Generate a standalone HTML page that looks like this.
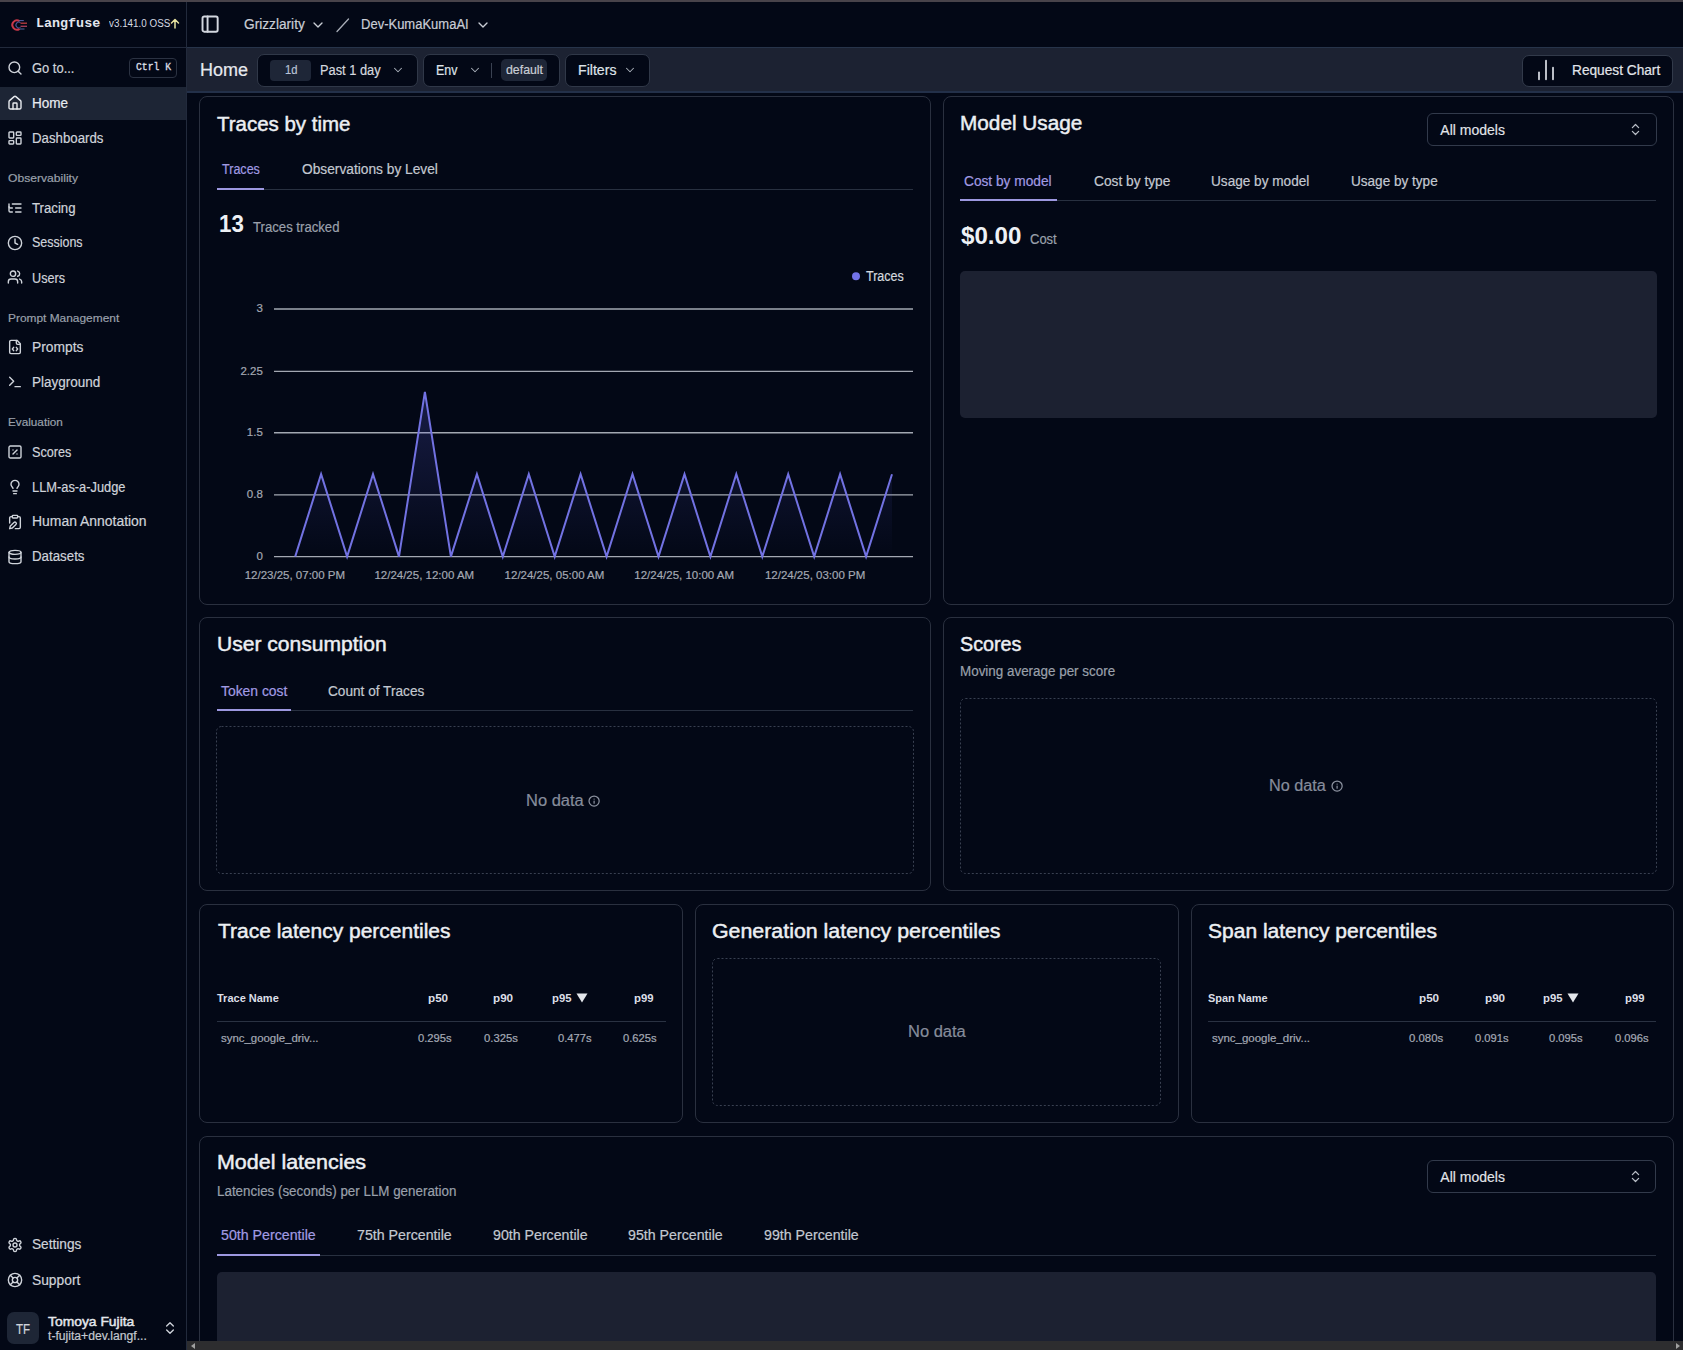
<!DOCTYPE html>
<html><head><meta charset="utf-8"><title>Langfuse</title>
<style>
html,body{margin:0;padding:0;}
body{width:1683px;height:1350px;overflow:hidden;background:#030816;position:relative;font-family:"Liberation Sans",sans-serif;}
.t{position:absolute;white-space:nowrap;transform-origin:0 50%;}
.r{position:absolute;}
.i{position:absolute;overflow:visible;}
</style></head><body>
<div class="r" style="left:0px;top:0px;width:1683px;height:2px;background:#48434a;"></div>
<div class="r" style="left:186px;top:2px;width:1px;height:1348px;background:#222a3c;"></div>
<div class="r" style="left:0px;top:47px;width:187px;height:1px;background:#222a3c;"></div>
<div class="r" style="left:187px;top:47px;width:1496px;height:1px;background:#27344a;"></div>
<svg class="i" style="left:0px;top:0px" width="40" height="40" viewBox="0 0 40 40"><path d="M19.6 21.2 A4.6 4.6 0 1 0 19.6 28.8" fill="none" stroke="#c93849" stroke-width="2"/><path d="M20.5 22.6 A2.9 2.9 0 1 0 20.5 27.4" fill="none" stroke="#4a5598" stroke-width="1.1"/><path d="M19.2 20.6 H23.8" stroke="#5563a8" stroke-width="1"/><path d="M20.5 23.2 H27" stroke="#bf3d3f" stroke-width="1.3"/><path d="M20.5 26.3 H27" stroke="#a8405c" stroke-width="1.3"/><path d="M20 29 H24.5" stroke="#4b6a9e" stroke-width="1"/></svg>
<div class="t" style="left:35.6px;top:16.6px;font-size:13.3px;line-height:13.3px;color:#e2e6ee;font-family:'Liberation Mono', monospace;font-weight:700;transform:scaleX(1.0055);">Langfuse</div>
<div class="t" style="left:108.7px;top:18.9px;font-size:10px;line-height:10px;color:#d6dae2;font-family:'Liberation Sans', sans-serif;transform:scaleX(0.9846);">v3.141.0 OSS</div>
<svg class="i" style="left:170px;top:18px" width="10" height="11" viewBox="0 0 10 11" fill="none" stroke="#e8e3a0" stroke-width="1.5" stroke-linecap="round" stroke-linejoin="round"><path d="M5 10V1.5M1.5 5 5 1.5 8.5 5"/></svg>
<svg class="i" style="left:6.5px;top:59.6px" width="16" height="16" viewBox="0 0 24 24" fill="none" stroke="#cfd3da" stroke-width="2.1" stroke-linecap="round" stroke-linejoin="round"><circle cx="11" cy="11" r="8"/><path d="m21 21-4.3-4.3"/></svg>
<div class="t" style="left:31.6px;top:61.3px;font-size:14px;line-height:14px;color:#cfd3da;font-family:'Liberation Sans', sans-serif;transform:scaleX(0.9236);-webkit-text-stroke:0.2px #cfd3da;">Go to...</div>
<div class="r" style="left:129px;top:58px;width:48px;height:20px;border:1px solid #2b3242;border-radius:4px;box-sizing:border-box;"></div>
<div class="t" style="left:136.0px;top:62.4px;font-size:10.5px;line-height:10.5px;color:#d8dce3;font-family:'Liberation Mono', monospace;transform:scaleX(0.9258);-webkit-text-stroke:0.35px #d8dce3;">Ctrl K</div>
<div class="r" style="left:0px;top:87px;width:186px;height:33px;background:#1d2535;"></div>
<svg class="i" style="left:6.5px;top:94.7px" width="16" height="16" viewBox="0 0 24 24" fill="none" stroke="#e8ebf0" stroke-width="2.1" stroke-linecap="round" stroke-linejoin="round"><path d="M15 21v-8a1 1 0 0 0-1-1h-4a1 1 0 0 0-1 1v8"/><path d="M3 10a2 2 0 0 1 .709-1.528l7-5.999a2 2 0 0 1 2.582 0l7 5.999A2 2 0 0 1 21 10v9a2 2 0 0 1-2 2H5a2 2 0 0 1-2-2z"/></svg>
<div class="t" style="left:31.6px;top:95.8px;font-size:14px;line-height:14px;color:#e8ebf0;font-family:'Liberation Sans', sans-serif;transform:scaleX(0.9666);-webkit-text-stroke:0.2px #e8ebf0;">Home</div>
<svg class="i" style="left:6.5px;top:129.7px" width="16" height="16" viewBox="0 0 24 24" fill="none" stroke="#cfd3da" stroke-width="2.1" stroke-linecap="round" stroke-linejoin="round"><rect width="7" height="9" x="3" y="3" rx="1"/><rect width="7" height="5" x="14" y="3" rx="1"/><rect width="7" height="9" x="14" y="12" rx="1"/><rect width="7" height="5" x="3" y="16" rx="1"/></svg>
<div class="t" style="left:31.6px;top:131.3px;font-size:14px;line-height:14px;color:#cfd3da;font-family:'Liberation Sans', sans-serif;transform:scaleX(0.9458);-webkit-text-stroke:0.2px #cfd3da;">Dashboards</div>
<svg class="i" style="left:6.5px;top:199.5px" width="16" height="16" viewBox="0 0 24 24" fill="none" stroke="#cfd3da" stroke-width="2.1" stroke-linecap="round" stroke-linejoin="round"><path d="M21 12h-8"/><path d="M21 6H8"/><path d="M21 18h-8"/><path d="M3 6v4c0 1.1.9 2 2 2h3"/><path d="M3 10v6c0 1.1.9 2 2 2h3"/></svg>
<div class="t" style="left:31.6px;top:200.6px;font-size:14px;line-height:14px;color:#cfd3da;font-family:'Liberation Sans', sans-serif;transform:scaleX(0.9423);-webkit-text-stroke:0.2px #cfd3da;">Tracing</div>
<svg class="i" style="left:6.5px;top:234.5px" width="16" height="16" viewBox="0 0 24 24" fill="none" stroke="#cfd3da" stroke-width="2.1" stroke-linecap="round" stroke-linejoin="round"><circle cx="12" cy="12" r="10"/><polyline points="12 6 12 12 16 14"/></svg>
<div class="t" style="left:31.6px;top:235.4px;font-size:14px;line-height:14px;color:#cfd3da;font-family:'Liberation Sans', sans-serif;transform:scaleX(0.8907);-webkit-text-stroke:0.2px #cfd3da;">Sessions</div>
<svg class="i" style="left:6.5px;top:269.3px" width="16" height="16" viewBox="0 0 24 24" fill="none" stroke="#cfd3da" stroke-width="2.1" stroke-linecap="round" stroke-linejoin="round"><path d="M16 21v-2a4 4 0 0 0-4-4H6a4 4 0 0 0-4 4v2"/><circle cx="9" cy="7" r="4"/><path d="M22 21v-2a4 4 0 0 0-3-3.87"/><path d="M16 3.13a4 4 0 0 1 0 7.75"/></svg>
<div class="t" style="left:31.6px;top:270.6px;font-size:14px;line-height:14px;color:#cfd3da;font-family:'Liberation Sans', sans-serif;transform:scaleX(0.9026);-webkit-text-stroke:0.2px #cfd3da;">Users</div>
<svg class="i" style="left:6.5px;top:339.3px" width="16" height="16" viewBox="0 0 24 24" fill="none" stroke="#cfd3da" stroke-width="2.1" stroke-linecap="round" stroke-linejoin="round"><path d="M10 12.5 8 15l2 2.5"/><path d="m14 12.5 2 2.5-2 2.5"/><path d="M14 2v4a2 2 0 0 0 2 2h4"/><path d="M15 2H6a2 2 0 0 0-2 2v16a2 2 0 0 0 2 2h12a2 2 0 0 0 2-2V7z"/></svg>
<div class="t" style="left:31.6px;top:340.1px;font-size:14px;line-height:14px;color:#cfd3da;font-family:'Liberation Sans', sans-serif;transform:scaleX(0.9861);-webkit-text-stroke:0.2px #cfd3da;">Prompts</div>
<svg class="i" style="left:6.5px;top:374.0px" width="16" height="16" viewBox="0 0 24 24" fill="none" stroke="#cfd3da" stroke-width="2.1" stroke-linecap="round" stroke-linejoin="round"><polyline points="4 17 10 11 4 5"/><line x1="12" x2="20" y1="19" y2="19"/></svg>
<div class="t" style="left:31.6px;top:374.6px;font-size:14px;line-height:14px;color:#cfd3da;font-family:'Liberation Sans', sans-serif;transform:scaleX(0.9643);-webkit-text-stroke:0.2px #cfd3da;">Playground</div>
<svg class="i" style="left:6.5px;top:444.0px" width="16" height="16" viewBox="0 0 24 24" fill="none" stroke="#cfd3da" stroke-width="2.1" stroke-linecap="round" stroke-linejoin="round"><rect width="18" height="18" x="3" y="3" rx="2"/><path d="m15 9-6 6"/><path d="M9 9h.01"/><path d="M15 15h.01"/></svg>
<div class="t" style="left:31.6px;top:444.6px;font-size:14px;line-height:14px;color:#cfd3da;font-family:'Liberation Sans', sans-serif;transform:scaleX(0.9019);-webkit-text-stroke:0.2px #cfd3da;">Scores</div>
<svg class="i" style="left:6.5px;top:479.0px" width="16" height="16" viewBox="0 0 24 24" fill="none" stroke="#cfd3da" stroke-width="2.1" stroke-linecap="round" stroke-linejoin="round"><path d="M15 14c.2-1 .7-1.7 1.5-2.5 1-.9 1.5-2.2 1.5-3.5A6 6 0 0 0 6 8c0 1 .2 2.2 1.5 3.5.7.7 1.3 1.5 1.5 2.5"/><path d="M9 18h6"/><path d="M10 22h4"/></svg>
<div class="t" style="left:31.6px;top:479.6px;font-size:14px;line-height:14px;color:#cfd3da;font-family:'Liberation Sans', sans-serif;transform:scaleX(0.9172);-webkit-text-stroke:0.2px #cfd3da;">LLM-as-a-Judge</div>
<svg class="i" style="left:6.5px;top:513.5px" width="16" height="16" viewBox="0 0 24 24" fill="none" stroke="#cfd3da" stroke-width="2.1" stroke-linecap="round" stroke-linejoin="round"><rect width="8" height="4" x="8" y="2" rx="1"/><path d="M10.4 12.6a2 2 0 0 1 3 3L8 21l-4 1 1-4Z"/><path d="M16 4h2a2 2 0 0 1 2 2v14a2 2 0 0 1-2 2h-5.5"/><path d="M4 13.5V6a2 2 0 0 1 2-2h2"/></svg>
<div class="t" style="left:31.6px;top:514.1px;font-size:14px;line-height:14px;color:#cfd3da;font-family:'Liberation Sans', sans-serif;transform:scaleX(0.9948);-webkit-text-stroke:0.2px #cfd3da;">Human Annotation</div>
<svg class="i" style="left:6.5px;top:548.5px" width="16" height="16" viewBox="0 0 24 24" fill="none" stroke="#cfd3da" stroke-width="2.1" stroke-linecap="round" stroke-linejoin="round"><ellipse cx="12" cy="5" rx="9" ry="3"/><path d="M3 5V19A9 3 0 0 0 21 19V5"/><path d="M3 12A9 3 0 0 0 21 12"/></svg>
<div class="t" style="left:31.6px;top:549.1px;font-size:14px;line-height:14px;color:#cfd3da;font-family:'Liberation Sans', sans-serif;transform:scaleX(0.9503);-webkit-text-stroke:0.2px #cfd3da;">Datasets</div>
<svg class="i" style="left:6.5px;top:1236.7px" width="16" height="16" viewBox="0 0 24 24" fill="none" stroke="#cfd3da" stroke-width="2.1" stroke-linecap="round" stroke-linejoin="round"><path d="M12.22 2h-.44a2 2 0 0 0-2 2v.18a2 2 0 0 1-1 1.73l-.43.25a2 2 0 0 1-2 0l-.15-.08a2 2 0 0 0-2.73.73l-.22.38a2 2 0 0 0 .73 2.73l.15.1a2 2 0 0 1 1 1.72v.51a2 2 0 0 1-1 1.74l-.15.09a2 2 0 0 0-.73 2.73l.22.38a2 2 0 0 0 2.73.73l.15-.08a2 2 0 0 1 2 0l.43.25a2 2 0 0 1 1 1.73V20a2 2 0 0 0 2 2h.44a2 2 0 0 0 2-2v-.18a2 2 0 0 1 1-1.73l.43-.25a2 2 0 0 1 2 0l.15.08a2 2 0 0 0 2.73-.73l.22-.39a2 2 0 0 0-.73-2.73l-.15-.08a2 2 0 0 1-1-1.74v-.5a2 2 0 0 1 1-1.74l.15-.09a2 2 0 0 0 .73-2.73l-.22-.38a2 2 0 0 0-2.73-.73l-.15.08a2 2 0 0 1-2 0l-.43-.25a2 2 0 0 1-1-1.73V4a2 2 0 0 0-2-2z"/><circle cx="12" cy="12" r="3"/></svg>
<div class="t" style="left:31.6px;top:1236.9px;font-size:14px;line-height:14px;color:#cfd3da;font-family:'Liberation Sans', sans-serif;transform:scaleX(0.9765);-webkit-text-stroke:0.2px #cfd3da;">Settings</div>
<svg class="i" style="left:6.5px;top:1271.7px" width="16" height="16" viewBox="0 0 24 24" fill="none" stroke="#cfd3da" stroke-width="2.1" stroke-linecap="round" stroke-linejoin="round"><circle cx="12" cy="12" r="10"/><path d="m4.93 4.93 4.24 4.24"/><path d="m14.83 9.17 4.24-4.24"/><path d="m14.83 14.83 4.24 4.24"/><path d="m9.17 14.83-4.24 4.24"/><circle cx="12" cy="12" r="4"/></svg>
<div class="t" style="left:31.6px;top:1272.5px;font-size:14px;line-height:14px;color:#cfd3da;font-family:'Liberation Sans', sans-serif;transform:scaleX(0.9850);-webkit-text-stroke:0.2px #cfd3da;">Support</div>
<div class="t" style="left:7.9px;top:173.1px;font-size:11.5px;line-height:11.5px;color:#9aa0ab;font-family:'Liberation Sans', sans-serif;transform:scaleX(1.0531);-webkit-text-stroke:0.2px #9aa0ab;">Observability</div>
<div class="t" style="left:7.9px;top:312.9px;font-size:11.5px;line-height:11.5px;color:#9aa0ab;font-family:'Liberation Sans', sans-serif;transform:scaleX(1.0355);-webkit-text-stroke:0.2px #9aa0ab;">Prompt Management</div>
<div class="t" style="left:7.9px;top:416.7px;font-size:11.5px;line-height:11.5px;color:#9aa0ab;font-family:'Liberation Sans', sans-serif;transform:scaleX(1.0204);-webkit-text-stroke:0.2px #9aa0ab;">Evaluation</div>
<div class="r" style="left:7px;top:1312px;width:32px;height:32px;background:#1e2636;border-radius:7px;"></div>
<div class="t" style="left:15.8px;top:1321.6px;font-size:14px;line-height:14px;color:#d0d4db;font-family:'Liberation Sans', sans-serif;transform:scaleX(0.8244);-webkit-text-stroke:0.2px #d0d4db;">TF</div>
<div class="t" style="left:48.0px;top:1314.6px;font-size:13px;line-height:13px;color:#e4e7ec;font-family:'Liberation Sans', sans-serif;transform:scaleX(1.0665);-webkit-text-stroke:0.45px #e4e7ec;">Tomoya Fujita</div>
<div class="t" style="left:48.0px;top:1330.0px;font-size:12px;line-height:12px;color:#c4c8d0;font-family:'Liberation Sans', sans-serif;transform:scaleX(1.0133);-webkit-text-stroke:0.2px #c4c8d0;">t-fujita+dev.langf...</div>
<svg class="i" style="left:162px;top:1320px" width="16" height="16" viewBox="0 0 24 24" fill="none" stroke="#cfd3da" stroke-width="2" stroke-linecap="round" stroke-linejoin="round"><path d="m7 15 5 5 5-5"/><path d="m7 9 5-5 5 5"/></svg>
<svg class="i" style="left:199.5px;top:14.4px" width="20.2" height="20.2" viewBox="0 0 24 24" fill="none" stroke="#d3d7df" stroke-width="2.3" stroke-linecap="round" stroke-linejoin="round"><rect width="18" height="18" x="3" y="3" rx="2"/><path d="M9 3v18"/></svg>
<div class="t" style="left:244.3px;top:17.1px;font-size:14px;line-height:14px;color:#c9cdd5;font-family:'Liberation Sans', sans-serif;transform:scaleX(0.9771);-webkit-text-stroke:0.2px #c9cdd5;">Grizzlarity</div>
<svg class="i" style="left:310px;top:17px" width="16" height="16" viewBox="0 0 24 24" fill="none" stroke="#c9cdd5" stroke-width="2" stroke-linecap="round" stroke-linejoin="round"><path d="m6 9 6 6 6-6"/></svg>
<svg class="i" style="left:335px;top:17px" width="16" height="16" viewBox="0 0 16 16"><path d="M2 14.5 13.5 2" stroke="#a9aeb8" stroke-width="1.3" stroke-linecap="round"/></svg>
<div class="t" style="left:361.3px;top:17.1px;font-size:14px;line-height:14px;color:#c9cdd5;font-family:'Liberation Sans', sans-serif;transform:scaleX(0.9290);-webkit-text-stroke:0.2px #c9cdd5;">Dev-KumaKumaAI</div>
<svg class="i" style="left:474.5px;top:17px" width="16" height="16" viewBox="0 0 24 24" fill="none" stroke="#c9cdd5" stroke-width="2" stroke-linecap="round" stroke-linejoin="round"><path d="m6 9 6 6 6-6"/></svg>
<div class="r" style="left:187px;top:48px;width:1496px;height:44px;background:#1c2232;"></div>
<div class="r" style="left:187px;top:91px;width:1496px;height:1.5px;background:#233049;"></div>
<div class="t" style="left:200.0px;top:61.2px;font-size:18px;line-height:18px;color:#e6e9ee;font-family:'Liberation Sans', sans-serif;-webkit-text-stroke:0.2px #e6e9ee;">Home</div>
<div class="r" style="left:257px;top:54px;width:161px;height:32.5px;background:#030816;border:1px solid #303848;border-radius:7px;box-sizing:border-box;"></div>
<div class="r" style="left:270px;top:60px;width:40.5px;height:20.5px;background:#1e2637;border-radius:4px;"></div>
<div class="t" style="left:285.0px;top:62.9px;font-size:13px;line-height:13px;color:#b9c3d6;font-family:'Liberation Sans', sans-serif;transform:scaleX(0.8644);-webkit-text-stroke:0.2px #b9c3d6;">1d</div>
<div class="t" style="left:320.1px;top:62.6px;font-size:14px;line-height:14px;color:#d4d8df;font-family:'Liberation Sans', sans-serif;transform:scaleX(0.9161);-webkit-text-stroke:0.2px #d4d8df;">Past 1 day</div>
<svg class="i" style="left:390.5px;top:63px" width="14" height="14" viewBox="0 0 24 24" fill="none" stroke="#aab0ba" stroke-width="1.8" stroke-linecap="round" stroke-linejoin="round"><path d="m6 9 6 6 6-6"/></svg>
<div class="r" style="left:423px;top:54px;width:137px;height:32.5px;background:#030816;border:1px solid #303848;border-radius:7px;box-sizing:border-box;"></div>
<div class="t" style="left:436.4px;top:63.2px;font-size:14px;line-height:14px;color:#dfe3e9;font-family:'Liberation Sans', sans-serif;transform:scaleX(0.8871);-webkit-text-stroke:0.2px #dfe3e9;">Env</div>
<svg class="i" style="left:467.5px;top:63px" width="14" height="14" viewBox="0 0 24 24" fill="none" stroke="#aab0ba" stroke-width="1.8" stroke-linecap="round" stroke-linejoin="round"><path d="m6 9 6 6 6-6"/></svg>
<div class="r" style="left:491px;top:63px;width:1px;height:15px;background:#3a4252;"></div>
<div class="r" style="left:500.5px;top:59.3px;width:46.5px;height:22px;background:#1e2637;border-radius:5px;"></div>
<div class="t" style="left:505.6px;top:62.6px;font-size:13px;line-height:13px;color:#c9cdd5;font-family:'Liberation Sans', sans-serif;transform:scaleX(0.9479);-webkit-text-stroke:0.2px #c9cdd5;">default</div>
<div class="r" style="left:565px;top:54px;width:85px;height:32.5px;background:#030816;border:1px solid #303848;border-radius:7px;box-sizing:border-box;"></div>
<div class="t" style="left:578.3px;top:63.2px;font-size:14px;line-height:14px;color:#dfe3e9;font-family:'Liberation Sans', sans-serif;transform:scaleX(1.0102);-webkit-text-stroke:0.2px #dfe3e9;">Filters</div>
<svg class="i" style="left:622.5px;top:63px" width="14" height="14" viewBox="0 0 24 24" fill="none" stroke="#aab0ba" stroke-width="1.8" stroke-linecap="round" stroke-linejoin="round"><path d="m6 9 6 6 6-6"/></svg>
<div class="r" style="left:1522px;top:54.5px;width:151px;height:32px;background:#030816;border:1px solid #323a4a;border-radius:7px;box-sizing:border-box;"></div>
<svg class="i" style="left:1531.9px;top:56.3px" width="28" height="28" viewBox="0 0 24 24" fill="none" stroke="#d6dae2" stroke-width="1.5" stroke-linecap="round" stroke-linejoin="round"><line x1="18" x2="18" y1="20" y2="10"/><line x1="12" x2="12" y1="20" y2="4"/><line x1="6" x2="6" y1="20" y2="14"/></svg>
<div class="t" style="left:1571.8px;top:62.9px;font-size:14px;line-height:14px;color:#e2e5ea;font-family:'Liberation Sans', sans-serif;transform:scaleX(0.9771);-webkit-text-stroke:0.2px #e2e5ea;">Request Chart</div>
<div class="r" style="left:199px;top:96px;width:732px;height:509px;background:#030816;border:1px solid #2a303f;border-radius:8px;box-sizing:border-box;"></div>
<div class="t" style="left:217.2px;top:113.5px;font-size:20px;line-height:20px;color:#eceff3;font-family:'Liberation Sans', sans-serif;transform:scaleX(1.0230);-webkit-text-stroke:0.45px #eceff3;">Traces by time</div>
<div class="r" style="left:217px;top:189px;width:696px;height:1px;background:#283040;"></div>
<div class="r" style="left:217px;top:188px;width:47px;height:2px;background:#9d98e0;"></div>
<div class="t" style="left:221.6px;top:162.4px;font-size:14px;line-height:14px;color:#a19be3;font-family:'Liberation Sans', sans-serif;transform:scaleX(0.8967);-webkit-text-stroke:0.2px #a19be3;">Traces</div>
<div class="t" style="left:302.0px;top:162.4px;font-size:14px;line-height:14px;color:#c3c8d1;font-family:'Liberation Sans', sans-serif;transform:scaleX(0.9811);-webkit-text-stroke:0.2px #c3c8d1;">Observations by Level</div>
<div class="t" style="left:218.5px;top:211.9px;font-size:24px;line-height:24px;color:#eef1f5;font-family:'Liberation Sans', sans-serif;font-weight:700;transform:scaleX(0.9290);">13</div>
<div class="t" style="left:253.3px;top:220.3px;font-size:14px;line-height:14px;color:#9aa0ab;font-family:'Liberation Sans', sans-serif;transform:scaleX(0.9395);-webkit-text-stroke:0.2px #9aa0ab;">Traces tracked</div>
<svg class="i" style="left:0px;top:0px" width="1683" height="700" viewBox="0 0 1683 700"><defs><linearGradient id="g" x1="0" y1="0" x2="0" y2="1"><stop offset="0" stop-color="#6366f1" stop-opacity="0.22"/><stop offset="1" stop-color="#6366f1" stop-opacity="0.0"/></linearGradient></defs><line x1="274" x2="913" y1="309" y2="309" stroke="#a3a8b2" stroke-width="1.35"/><line x1="274" x2="913" y1="371.3" y2="371.3" stroke="#a3a8b2" stroke-width="1.35"/><line x1="274" x2="913" y1="432.7" y2="432.7" stroke="#a3a8b2" stroke-width="1.35"/><line x1="274" x2="913" y1="494.8" y2="494.8" stroke="#a3a8b2" stroke-width="1.35"/><line x1="274" x2="913" y1="556.6" y2="556.6" stroke="#a3a8b2" stroke-width="1.35"/><path d="M295.2,556.6 L295.2,556.6 L321.1,474.2 L347.1,556.6 L373.0,474.2 L399.0,556.6 L424.9,391.8 L450.9,556.6 L476.9,474.2 L502.8,556.6 L528.8,474.2 L554.7,556.6 L580.6,474.2 L606.6,556.6 L632.5,474.2 L658.5,556.6 L684.5,474.2 L710.4,556.6 L736.3,474.2 L762.3,556.6 L788.2,474.2 L814.2,556.6 L840.1,474.2 L866.1,556.6 L892.0,474.2 L892.0,556.6 Z" fill="url(#g)"/><polyline points="295.2,556.6 321.1,474.2 347.1,556.6 373.0,474.2 399.0,556.6 424.9,391.8 450.9,556.6 476.9,474.2 502.8,556.6 528.8,474.2 554.7,556.6 580.6,474.2 606.6,556.6 632.5,474.2 658.5,556.6 684.5,474.2 710.4,556.6 736.3,474.2 762.3,556.6 788.2,474.2 814.2,556.6 840.1,474.2 866.1,556.6 892.0,474.2" fill="none" stroke="#7272e2" stroke-width="2" stroke-linejoin="miter"/><circle cx="856" cy="276.3" r="4" fill="#7272e8"/></svg>
<div class="t" style="left:866.4px;top:268.7px;font-size:14px;line-height:14px;color:#d4d8df;font-family:'Liberation Sans', sans-serif;transform:scaleX(0.8943);-webkit-text-stroke:0.2px #d4d8df;">Traces</div>
<div class="t" style="left:256.4px;top:303.3px;font-size:11.5px;line-height:11.5px;color:#a3a8b3;font-family:'Liberation Sans', sans-serif;-webkit-text-stroke:0.2px #a3a8b3;">3</div>
<div class="t" style="left:240.4px;top:365.6px;font-size:11.5px;line-height:11.5px;color:#a3a8b3;font-family:'Liberation Sans', sans-serif;-webkit-text-stroke:0.2px #a3a8b3;">2.25</div>
<div class="t" style="left:246.8px;top:427.0px;font-size:11.5px;line-height:11.5px;color:#a3a8b3;font-family:'Liberation Sans', sans-serif;-webkit-text-stroke:0.2px #a3a8b3;">1.5</div>
<div class="t" style="left:246.8px;top:489.1px;font-size:11.5px;line-height:11.5px;color:#a3a8b3;font-family:'Liberation Sans', sans-serif;-webkit-text-stroke:0.2px #a3a8b3;">0.8</div>
<div class="t" style="left:256.4px;top:550.9px;font-size:11.5px;line-height:11.5px;color:#a3a8b3;font-family:'Liberation Sans', sans-serif;-webkit-text-stroke:0.2px #a3a8b3;">0</div>
<div class="t" style="left:244.7px;top:569.7px;font-size:11.5px;line-height:11.5px;color:#a3a8b3;font-family:'Liberation Sans', sans-serif;-webkit-text-stroke:0.2px #a3a8b3;">12/23/25, 07:00 PM</div>
<div class="t" style="left:374.4px;top:569.7px;font-size:11.5px;line-height:11.5px;color:#a3a8b3;font-family:'Liberation Sans', sans-serif;-webkit-text-stroke:0.2px #a3a8b3;">12/24/25, 12:00 AM</div>
<div class="t" style="left:504.6px;top:569.7px;font-size:11.5px;line-height:11.5px;color:#a3a8b3;font-family:'Liberation Sans', sans-serif;-webkit-text-stroke:0.2px #a3a8b3;">12/24/25, 05:00 AM</div>
<div class="t" style="left:634.3px;top:569.7px;font-size:11.5px;line-height:11.5px;color:#a3a8b3;font-family:'Liberation Sans', sans-serif;-webkit-text-stroke:0.2px #a3a8b3;">12/24/25, 10:00 AM</div>
<div class="t" style="left:764.9px;top:569.7px;font-size:11.5px;line-height:11.5px;color:#a3a8b3;font-family:'Liberation Sans', sans-serif;-webkit-text-stroke:0.2px #a3a8b3;">12/24/25, 03:00 PM</div>
<div class="r" style="left:943px;top:96px;width:731px;height:509px;background:#030816;border:1px solid #2a303f;border-radius:8px;box-sizing:border-box;"></div>
<div class="t" style="left:960.3px;top:112.5px;font-size:20px;line-height:20px;color:#eceff3;font-family:'Liberation Sans', sans-serif;transform:scaleX(1.0378);-webkit-text-stroke:0.45px #eceff3;">Model Usage</div>
<div class="r" style="left:1427px;top:113px;width:229.5px;height:32.5px;background:#030816;border:1px solid #323a4b;border-radius:6px;box-sizing:border-box;"></div>
<div class="t" style="left:1440.3px;top:122.7px;font-size:14px;line-height:14px;color:#e2e5ea;font-family:'Liberation Sans', sans-serif;-webkit-text-stroke:0.15px #e2e5ea;">All models</div>
<svg class="i" style="left:1627.5px;top:121.5px" width="15" height="15" viewBox="0 0 24 24" fill="none" stroke="#b8bdc6" stroke-width="2" stroke-linecap="round" stroke-linejoin="round"><path d="m7 15 5 5 5-5"/><path d="m7 9 5-5 5 5"/></svg>
<div class="r" style="left:960px;top:200px;width:696px;height:1px;background:#283040;"></div>
<div class="r" style="left:960px;top:199px;width:97px;height:2px;background:#9d98e0;"></div>
<div class="t" style="left:964.3px;top:173.8px;font-size:14px;line-height:14px;color:#a19be3;font-family:'Liberation Sans', sans-serif;transform:scaleX(0.9789);-webkit-text-stroke:0.2px #a19be3;">Cost by model</div>
<div class="t" style="left:1093.7px;top:173.8px;font-size:14px;line-height:14px;color:#c3c8d1;font-family:'Liberation Sans', sans-serif;transform:scaleX(0.9818);-webkit-text-stroke:0.2px #c3c8d1;">Cost by type</div>
<div class="t" style="left:1211.4px;top:173.8px;font-size:14px;line-height:14px;color:#c3c8d1;font-family:'Liberation Sans', sans-serif;transform:scaleX(0.9717);-webkit-text-stroke:0.2px #c3c8d1;">Usage by model</div>
<div class="t" style="left:1351.0px;top:173.8px;font-size:14px;line-height:14px;color:#c3c8d1;font-family:'Liberation Sans', sans-serif;transform:scaleX(0.9687);-webkit-text-stroke:0.2px #c3c8d1;">Usage by type</div>
<div class="t" style="left:960.8px;top:224.0px;font-size:24px;line-height:24px;color:#eef1f5;font-family:'Liberation Sans', sans-serif;font-weight:700;transform:scaleX(1.0057);">$0.00</div>
<div class="t" style="left:1030.1px;top:232.4px;font-size:14px;line-height:14px;color:#9aa0ab;font-family:'Liberation Sans', sans-serif;transform:scaleX(0.9275);-webkit-text-stroke:0.2px #9aa0ab;">Cost</div>
<div class="r" style="left:960px;top:271px;width:696.5px;height:147px;background:#1c2131;border-radius:5px;"></div>
<div class="r" style="left:199px;top:617px;width:732px;height:274px;background:#030816;border:1px solid #2a303f;border-radius:8px;box-sizing:border-box;"></div>
<div class="t" style="left:217.0px;top:634.4px;font-size:20px;line-height:20px;color:#eceff3;font-family:'Liberation Sans', sans-serif;transform:scaleX(1.0528);-webkit-text-stroke:0.45px #eceff3;">User consumption</div>
<div class="r" style="left:217px;top:709.5px;width:696px;height:1px;background:#283040;"></div>
<div class="r" style="left:217px;top:708.5px;width:74.30000000000001px;height:2px;background:#9d98e0;"></div>
<div class="t" style="left:220.5px;top:683.6px;font-size:14px;line-height:14px;color:#a19be3;font-family:'Liberation Sans', sans-serif;transform:scaleX(0.9922);-webkit-text-stroke:0.2px #a19be3;">Token cost</div>
<div class="t" style="left:328.2px;top:683.6px;font-size:14px;line-height:14px;color:#c3c8d1;font-family:'Liberation Sans', sans-serif;transform:scaleX(0.9744);-webkit-text-stroke:0.2px #c3c8d1;">Count of Traces</div>
<svg class="i" style="left:216px;top:726px" width="698" height="148" viewBox="0 0 698 148"><rect x="0.5" y="0.5" width="697" height="147" rx="5" fill="none" stroke="#394051" stroke-width="1" stroke-dasharray="2 2"/></svg>
<div class="t" style="left:525.6px;top:792.6px;font-size:16px;line-height:16px;color:#868c9b;font-family:'Liberation Sans', sans-serif;transform:scaleX(1.0296);-webkit-text-stroke:0.2px #868c9b;">No data</div>
<svg class="i" style="left:587.5px;top:794.6px" width="12.2" height="12.2" viewBox="0 0 24 24" fill="none" stroke="#8d93a1" stroke-width="2.4" stroke-linecap="round" stroke-linejoin="round"><circle cx="12" cy="12" r="10"/><path d="M12 16v-4"/><path d="M12 8h.01"/></svg>
<div class="r" style="left:943px;top:617px;width:731px;height:274px;background:#030816;border:1px solid #2a303f;border-radius:8px;box-sizing:border-box;"></div>
<div class="t" style="left:960.3px;top:634.4px;font-size:20px;line-height:20px;color:#eceff3;font-family:'Liberation Sans', sans-serif;transform:scaleX(0.9864);-webkit-text-stroke:0.45px #eceff3;">Scores</div>
<div class="t" style="left:960.3px;top:664.2px;font-size:14px;line-height:14px;color:#9aa0ab;font-family:'Liberation Sans', sans-serif;transform:scaleX(0.9582);-webkit-text-stroke:0.2px #9aa0ab;">Moving average per score</div>
<svg class="i" style="left:960px;top:698px" width="697" height="176" viewBox="0 0 697 176"><rect x="0.5" y="0.5" width="696" height="175" rx="5" fill="none" stroke="#394051" stroke-width="1" stroke-dasharray="2 2"/></svg>
<div class="t" style="left:1269.2px;top:778.0px;font-size:16px;line-height:16px;color:#868c9b;font-family:'Liberation Sans', sans-serif;transform:scaleX(1.0136);-webkit-text-stroke:0.2px #868c9b;">No data</div>
<svg class="i" style="left:1331.2px;top:779.6px" width="12.2" height="12.2" viewBox="0 0 24 24" fill="none" stroke="#8d93a1" stroke-width="2.4" stroke-linecap="round" stroke-linejoin="round"><circle cx="12" cy="12" r="10"/><path d="M12 16v-4"/><path d="M12 8h.01"/></svg>
<div class="r" style="left:199px;top:904px;width:484px;height:219px;background:#030816;border:1px solid #2a303f;border-radius:8px;box-sizing:border-box;"></div>
<div class="t" style="left:217.5px;top:920.7px;font-size:20px;line-height:20px;color:#eceff3;font-family:'Liberation Sans', sans-serif;transform:scaleX(1.0492);-webkit-text-stroke:0.45px #eceff3;">Trace latency percentiles</div>
<div class="t" style="left:217.0px;top:992.6px;font-size:11px;line-height:11px;color:#dcdfe6;font-family:'Liberation Sans', sans-serif;font-weight:700;">Trace Name</div>
<div class="t" style="left:427.5px;top:992.6px;font-size:11px;line-height:11px;color:#dcdfe6;font-family:'Liberation Sans', sans-serif;font-weight:700;transform:scaleX(1.0604);">p50</div>
<div class="t" style="left:492.9px;top:992.6px;font-size:11px;line-height:11px;color:#dcdfe6;font-family:'Liberation Sans', sans-serif;font-weight:700;transform:scaleX(1.0604);">p90</div>
<div class="t" style="left:552.0px;top:992.6px;font-size:11px;line-height:11px;color:#dcdfe6;font-family:'Liberation Sans', sans-serif;font-weight:700;transform:scaleX(1.0287);">p95</div>
<div class="t" style="left:633.6px;top:992.6px;font-size:11px;line-height:11px;color:#dcdfe6;font-family:'Liberation Sans', sans-serif;font-weight:700;transform:scaleX(1.0340);">p99</div>
<div class="r" style="left:217px;top:1020.5px;width:448.5px;height:1px;background:#2a3242;"></div>
<div class="t" style="left:220.5px;top:1032.8px;font-size:11px;line-height:11px;color:#a5aab5;font-family:'Liberation Sans', sans-serif;transform:scaleX(1.0376);-webkit-text-stroke:0.2px #a5aab5;">sync_google_driv...</div>
<div class="t" style="left:417.9px;top:1032.8px;font-size:11px;line-height:11px;color:#a5aab5;font-family:'Liberation Sans', sans-serif;transform:scaleX(1.0173);-webkit-text-stroke:0.2px #a5aab5;">0.295s</div>
<div class="t" style="left:483.6px;top:1032.8px;font-size:11px;line-height:11px;color:#a5aab5;font-family:'Liberation Sans', sans-serif;transform:scaleX(1.0264);-webkit-text-stroke:0.2px #a5aab5;">0.325s</div>
<div class="t" style="left:558.0px;top:1032.8px;font-size:11px;line-height:11px;color:#a5aab5;font-family:'Liberation Sans', sans-serif;transform:scaleX(1.0173);-webkit-text-stroke:0.2px #a5aab5;">0.477s</div>
<div class="t" style="left:623.4px;top:1032.8px;font-size:11px;line-height:11px;color:#a5aab5;font-family:'Liberation Sans', sans-serif;transform:scaleX(1.0173);-webkit-text-stroke:0.2px #a5aab5;">0.625s</div>
<svg class="i" style="left:576px;top:993px" width="12" height="10" viewBox="0 0 12 10"><path d="M0.5 0.5 H11.5 L6 9.5 Z" fill="#e4e7ec"/></svg>
<div class="r" style="left:695px;top:904px;width:484px;height:219px;background:#030816;border:1px solid #2a303f;border-radius:8px;box-sizing:border-box;"></div>
<div class="t" style="left:712.4px;top:920.7px;font-size:20px;line-height:20px;color:#eceff3;font-family:'Liberation Sans', sans-serif;transform:scaleX(1.0679);-webkit-text-stroke:0.45px #eceff3;">Generation latency percentiles</div>
<svg class="i" style="left:712px;top:958px" width="449" height="148" viewBox="0 0 449 148"><rect x="0.5" y="0.5" width="448" height="147" rx="5" fill="none" stroke="#394051" stroke-width="1" stroke-dasharray="2 2"/></svg>
<div class="t" style="left:907.7px;top:1024.1px;font-size:16px;line-height:16px;color:#868c9b;font-family:'Liberation Sans', sans-serif;transform:scaleX(1.0314);-webkit-text-stroke:0.2px #868c9b;">No data</div>
<div class="r" style="left:1191px;top:904px;width:483px;height:219px;background:#030816;border:1px solid #2a303f;border-radius:8px;box-sizing:border-box;"></div>
<div class="t" style="left:1208.0px;top:920.7px;font-size:20px;line-height:20px;color:#eceff3;font-family:'Liberation Sans', sans-serif;transform:scaleX(1.0504);-webkit-text-stroke:0.45px #eceff3;">Span latency percentiles</div>
<div class="t" style="left:1208.0px;top:992.6px;font-size:11px;line-height:11px;color:#dcdfe6;font-family:'Liberation Sans', sans-serif;font-weight:700;transform:scaleX(0.9948);">Span Name</div>
<div class="t" style="left:1418.6px;top:992.6px;font-size:11px;line-height:11px;color:#dcdfe6;font-family:'Liberation Sans', sans-serif;font-weight:700;transform:scaleX(1.0604);">p50</div>
<div class="t" style="left:1484.7px;top:992.6px;font-size:11px;line-height:11px;color:#dcdfe6;font-family:'Liberation Sans', sans-serif;font-weight:700;transform:scaleX(1.0604);">p90</div>
<div class="t" style="left:1543.0px;top:992.6px;font-size:11px;line-height:11px;color:#dcdfe6;font-family:'Liberation Sans', sans-serif;font-weight:700;transform:scaleX(1.0287);">p95</div>
<div class="t" style="left:1624.5px;top:992.6px;font-size:11px;line-height:11px;color:#dcdfe6;font-family:'Liberation Sans', sans-serif;font-weight:700;transform:scaleX(1.0287);">p99</div>
<div class="r" style="left:1208px;top:1020.5px;width:448.4000000000001px;height:1px;background:#2a3242;"></div>
<div class="t" style="left:1211.5px;top:1032.8px;font-size:11px;line-height:11px;color:#a5aab5;font-family:'Liberation Sans', sans-serif;transform:scaleX(1.0430);-webkit-text-stroke:0.2px #a5aab5;">sync_google_driv...</div>
<div class="t" style="left:1408.6px;top:1032.8px;font-size:11px;line-height:11px;color:#a5aab5;font-family:'Liberation Sans', sans-serif;transform:scaleX(1.0355);-webkit-text-stroke:0.2px #a5aab5;">0.080s</div>
<div class="t" style="left:1474.7px;top:1032.8px;font-size:11px;line-height:11px;color:#a5aab5;font-family:'Liberation Sans', sans-serif;transform:scaleX(1.0173);-webkit-text-stroke:0.2px #a5aab5;">0.091s</div>
<div class="t" style="left:1549.0px;top:1032.8px;font-size:11px;line-height:11px;color:#a5aab5;font-family:'Liberation Sans', sans-serif;transform:scaleX(1.0173);-webkit-text-stroke:0.2px #a5aab5;">0.095s</div>
<div class="t" style="left:1614.5px;top:1032.8px;font-size:11px;line-height:11px;color:#a5aab5;font-family:'Liberation Sans', sans-serif;transform:scaleX(1.0173);-webkit-text-stroke:0.2px #a5aab5;">0.096s</div>
<svg class="i" style="left:1567px;top:993px" width="12" height="10" viewBox="0 0 12 10"><path d="M0.5 0.5 H11.5 L6 9.5 Z" fill="#e4e7ec"/></svg>
<div class="r" style="left:199px;top:1136px;width:1475px;height:260px;background:#030816;border:1px solid #2a303f;border-radius:8px;box-sizing:border-box;"></div>
<div class="t" style="left:216.6px;top:1152.2px;font-size:20px;line-height:20px;color:#eceff3;font-family:'Liberation Sans', sans-serif;transform:scaleX(1.0729);-webkit-text-stroke:0.45px #eceff3;">Model latencies</div>
<div class="t" style="left:216.6px;top:1183.7px;font-size:14px;line-height:14px;color:#9aa0ab;font-family:'Liberation Sans', sans-serif;transform:scaleX(0.9553);-webkit-text-stroke:0.2px #9aa0ab;">Latencies (seconds) per LLM generation</div>
<div class="r" style="left:1426.6px;top:1160px;width:229.5px;height:33px;background:#030816;border:1px solid #323a4b;border-radius:6px;box-sizing:border-box;"></div>
<div class="t" style="left:1440.3px;top:1170.0px;font-size:14px;line-height:14px;color:#e2e5ea;font-family:'Liberation Sans', sans-serif;-webkit-text-stroke:0.15px #e2e5ea;">All models</div>
<svg class="i" style="left:1627.5px;top:1169px" width="15" height="15" viewBox="0 0 24 24" fill="none" stroke="#b8bdc6" stroke-width="2" stroke-linecap="round" stroke-linejoin="round"><path d="m7 15 5 5 5-5"/><path d="m7 9 5-5 5 5"/></svg>
<div class="r" style="left:216.6px;top:1254.5px;width:1439.4px;height:1px;background:#283040;"></div>
<div class="r" style="left:216.6px;top:1253.5px;width:103.6px;height:2px;background:#9d98e0;"></div>
<div class="t" style="left:221.0px;top:1227.7px;font-size:14px;line-height:14px;color:#a19be3;font-family:'Liberation Sans', sans-serif;transform:scaleX(1.0140);-webkit-text-stroke:0.2px #a19be3;">50th Percentile</div>
<div class="t" style="left:356.8px;top:1227.7px;font-size:14px;line-height:14px;color:#c3c8d1;font-family:'Liberation Sans', sans-serif;transform:scaleX(1.0140);-webkit-text-stroke:0.2px #c3c8d1;">75th Percentile</div>
<div class="t" style="left:492.6px;top:1227.7px;font-size:14px;line-height:14px;color:#c3c8d1;font-family:'Liberation Sans', sans-serif;transform:scaleX(1.0129);-webkit-text-stroke:0.2px #c3c8d1;">90th Percentile</div>
<div class="t" style="left:628.3px;top:1227.7px;font-size:14px;line-height:14px;color:#c3c8d1;font-family:'Liberation Sans', sans-serif;transform:scaleX(1.0140);-webkit-text-stroke:0.2px #c3c8d1;">95th Percentile</div>
<div class="t" style="left:764.0px;top:1227.7px;font-size:14px;line-height:14px;color:#c3c8d1;font-family:'Liberation Sans', sans-serif;transform:scaleX(1.0140);-webkit-text-stroke:0.2px #c3c8d1;">99th Percentile</div>
<div class="r" style="left:216.6px;top:1272.3px;width:1439.5px;height:120px;background:#1c2131;border-radius:5px;"></div>
<div class="r" style="left:187px;top:1341px;width:1496px;height:9px;background:#2d2d2f;"></div>
<svg class="i" style="left:189px;top:1342px" width="8" height="8" viewBox="0 0 8 8"><path d="M6 1 L2 4 L6 7Z" fill="#a0a0a0"/></svg>
<svg class="i" style="left:1674px;top:1342px" width="8" height="8" viewBox="0 0 8 8"><path d="M2 1 L6 4 L2 7Z" fill="#a0a0a0"/></svg>
</body></html>
